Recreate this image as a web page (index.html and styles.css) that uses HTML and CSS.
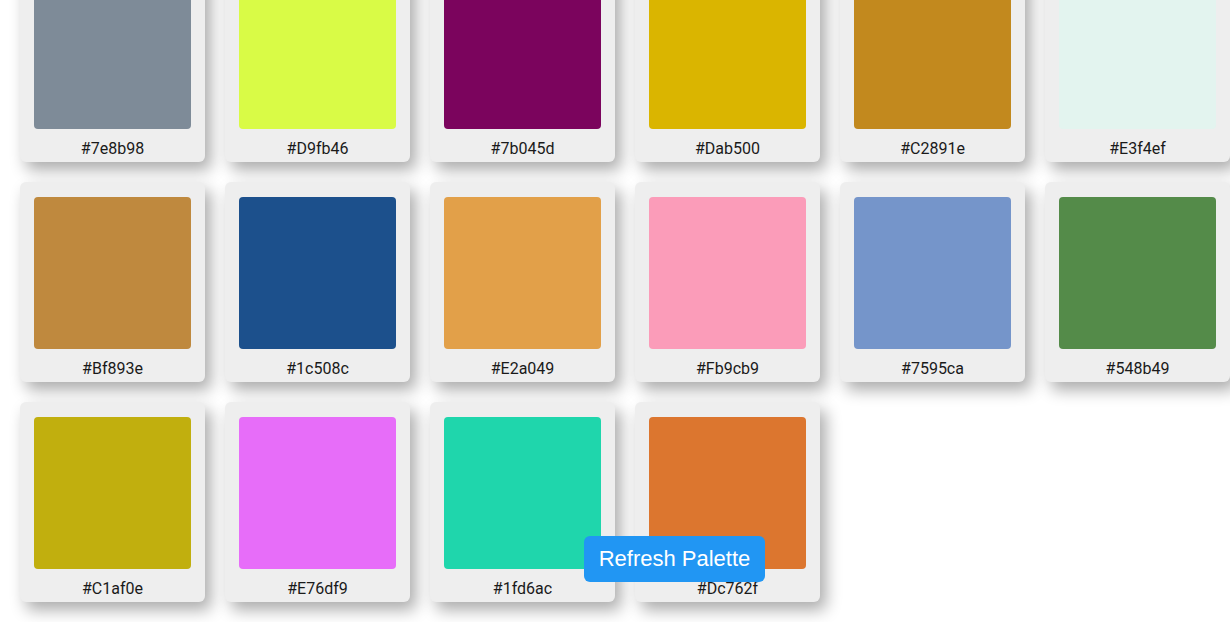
FILE: index.html
```html
<!DOCTYPE html>
<html lang="en">
<head>
<meta charset="utf-8">
<title>Palette</title>
<link rel="stylesheet" href="styles.css">
</head>
<body>
<main class="palette">
  <div class="card"><div class="swatch" style="background:#7e8b98"></div><div class="label">#7e8b98</div></div>
  <div class="card"><div class="swatch" style="background:#d9fb46"></div><div class="label">#D9fb46</div></div>
  <div class="card"><div class="swatch" style="background:#7b045d"></div><div class="label">#7b045d</div></div>
  <div class="card"><div class="swatch" style="background:#dab500"></div><div class="label">#Dab500</div></div>
  <div class="card"><div class="swatch" style="background:#c2891e"></div><div class="label">#C2891e</div></div>
  <div class="card"><div class="swatch" style="background:#e3f4ef"></div><div class="label">#E3f4ef</div></div>
  <div class="card"><div class="swatch" style="background:#bf893e"></div><div class="label">#Bf893e</div></div>
  <div class="card"><div class="swatch" style="background:#1c508c"></div><div class="label">#1c508c</div></div>
  <div class="card"><div class="swatch" style="background:#e2a049"></div><div class="label">#E2a049</div></div>
  <div class="card"><div class="swatch" style="background:#fb9cb9"></div><div class="label">#Fb9cb9</div></div>
  <div class="card"><div class="swatch" style="background:#7595ca"></div><div class="label">#7595ca</div></div>
  <div class="card"><div class="swatch" style="background:#548b49"></div><div class="label">#548b49</div></div>
  <div class="card"><div class="swatch" style="background:#c1af0e"></div><div class="label">#C1af0e</div></div>
  <div class="card"><div class="swatch" style="background:#e76df9"></div><div class="label">#E76df9</div></div>
  <div class="card"><div class="swatch" style="background:#1fd6ac"></div><div class="label">#1fd6ac</div></div>
  <div class="card"><div class="swatch" style="background:#dc762f"></div><div class="label">#Dc762f</div></div>
</main>
<button class="refresh">Refresh Palette</button>
</body>
</html>
```
FILE: styles.css
```css
html, body {
  margin: 0;
  padding: 0;
  overflow: hidden;
  background: #ffffff;
}
body {
  font-family: Roboto, "Liberation Sans", sans-serif;
}
.palette {
  display: grid;
  grid-template-columns: repeat(6, 185px);
  grid-auto-rows: 200px;
  gap: 20px;
  margin-top: -38px;
  padding: 0 0 20px 20px;
}
.card {
  background: #eeeeee;
  border-radius: 6px;
  padding: 15px 14px 0;
  box-shadow: 6px 8px 16px rgba(0, 0, 0, 0.33);
  display: flex;
  flex-direction: column;
}
.swatch {
  height: 152px;
  border-radius: 4px;
}
.label {
  flex: 1;
  display: flex;
  align-items: center;
  justify-content: center;
  padding-top: 6px;
  font-size: 16px;
  color: #1a1a1a;
}
.refresh {
  position: fixed;
  left: 584px;
  top: 536px;
  width: 181px;
  height: 46px;
  background: #2196f3;
  color: #ffffff;
  border: none;
  border-radius: 6px;
  font-family: "Liberation Sans", Arial, sans-serif;
  font-size: 22px;
  padding: 0;
}
```
